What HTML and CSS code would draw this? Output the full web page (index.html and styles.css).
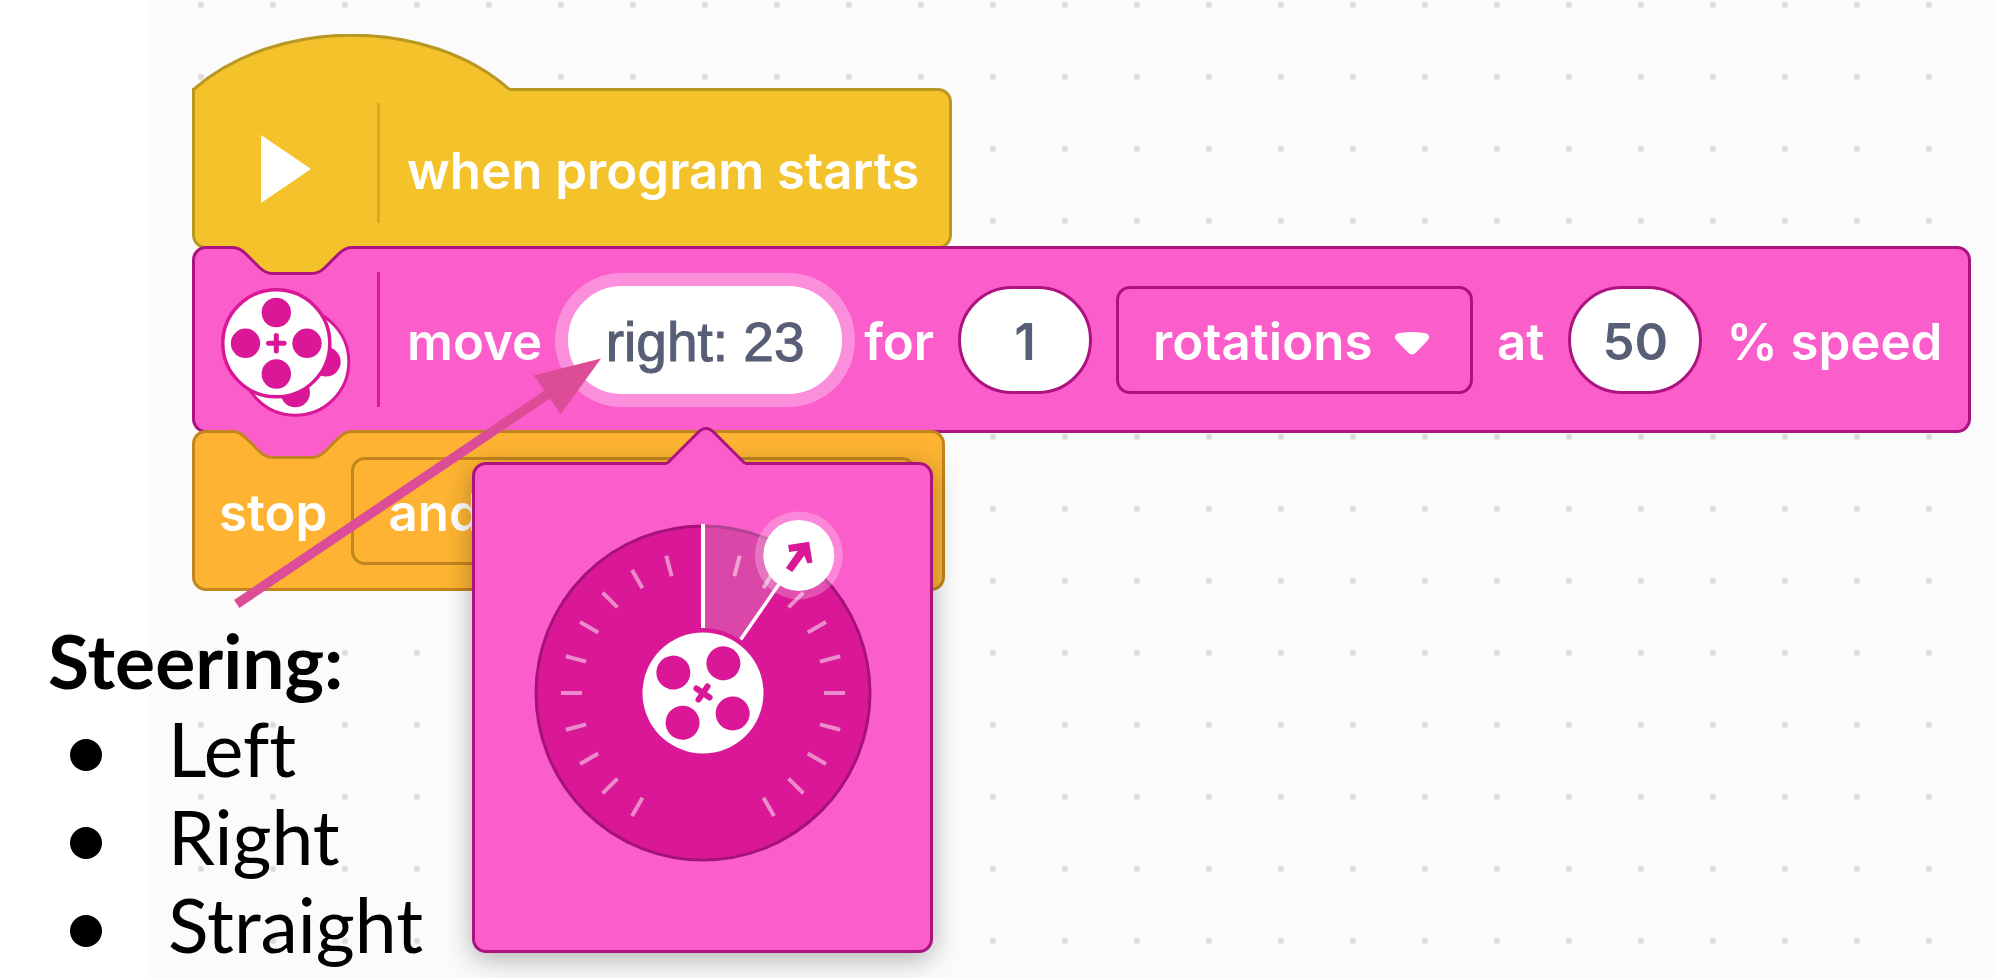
FILE: index.html
```html
<!DOCTYPE html>
<html lang="en">
<head>
  <meta charset="UTF-8" />
  <title>Steering</title>
  <link rel="stylesheet" href="styles.css">
</head>
<body>
  <main class="slide">
    <div class="workspace">
      <div class="block hat-block">
        <svg class="hat" width="322" height="60" viewBox="0 0 322 60">
          <path class="hat-fill" d="M3 59V55.5L1.5 55.5C84 -17 236 -17 317.5 55.5V59Z" />
          <path class="hat-line" d="M1.5 55.5C84 -17 236 -17 317.5 55.5" />
        </svg>
        <div class="icon-cell">
          <svg width="52" height="68" viewBox="0 0 52 68"><path fill="#fff" d="M1 0L51 34L1 68Z" /></svg>
        </div>
        <div class="divider"></div>
        <span class="label">when program starts</span>
      </div>

      <div class="block move-block">
        <svg class="notch" width="164" height="32" viewBox="0 0 164 32">
          <path class="notch-fill" d="M41 0V1.5C47.5 1.5 51 5 54 8L67.5 21.5C71 25 74 27.5 80.5 27.5H120C126.5 27.5 129.5 25 133 21.5L146.5 8C150 5 153 1.5 159.5 1.5V0Z" />
          <path class="notch-line" d="M39 1.5H41C47.5 1.5 51 5 54 8L67.5 21.5C71 25 74 27.5 80.5 27.5H120C126.5 27.5 129.5 25 133 21.5L146.5 8C150 5 153 1.5 159.5 1.5H162" />
        </svg>
        <div class="icon-cell">
          <svg class="wheels" width="130" height="130" viewBox="0 0 130 130">
            <g fill="#d91797">
              <circle cx="74.3" cy="73.8" r="53.5" fill="#fff" stroke="#d91797" stroke-width="3" />
              <circle cx="105" cy="73.8" r="14.7" />
              <circle cx="74.3" cy="104.5" r="14.7" />
              <circle cx="55.3" cy="55.3" r="53.5" fill="#fff" stroke="#d91797" stroke-width="3.5" />
              <circle cx="55.3" cy="24.5" r="14.7" />
              <circle cx="86" cy="55.3" r="14.7" />
              <circle cx="55.3" cy="86" r="14.7" />
              <circle cx="24.5" cy="55.3" r="14.7" />
            </g>
            <path d="M47.5 55.3H63.1M55.3 47.5V63.1" stroke="#d91797" stroke-width="5" stroke-linecap="round" />
          </svg>
        </div>
        <div class="divider"></div>
        <label class="label" for="steer">move</label>
        <div class="steer">
          <input class="field steer-field" id="steer" type="text" value="right: 23">
          <div class="popup">
            <svg class="pointer" width="84" height="42" viewBox="0 0 84 42">
              <path fill="#fb5ecb" d="M3 40V36.5L33.5 6Q42 -3 50.5 6L81 36.5V40Z" />
              <path fill="none" stroke="#ab147f" stroke-width="3" d="M3 36.5L33.5 6Q42 -3 50.5 6L81 36.5" />
            </svg>
            <svg class="dial" width="338" height="338" viewBox="-169 -169 338 338">
              <circle r="167" fill="#d91797" stroke="#a5127a" stroke-width="3" />
              <path fill="#e2e2e2" fill-opacity=".24" d="M0 -168.5V-65A65 65 0 0 1 37.3 -53.2L96.6 -138A168.5 168.5 0 0 0 0 -168.5Z" />
              <circle cx="95.8" cy="-137.6" r="44" fill="#fff" fill-opacity=".25" />
              <g id="ticks"></g>
              <path stroke="#fff" stroke-width="4" d="M0 -169V-65" />
              <path stroke="#fff" stroke-width="3.5" d="M37.7 -53.5L90 -129" />
              <circle cx="95.8" cy="-137.6" r="35.5" fill="#fff" />
              <path fill="#d91797" transform="translate(95.8 -137.6)" d="M-10.7 -10.3L10.3 -13.7L13.7 7L8.7 8L5.5 0L-6.5 16.7L-13 12.7L-1 -4.7L-9.7 -3.3Z" />
              <g transform="rotate(34.5)">
                <circle r="60.5" fill="#fff" />
                <g fill="#d91797">
                  <circle cx="0" cy="-36" r="17" />
                  <circle cx="36" cy="0" r="17" />
                  <circle cx="0" cy="36" r="17" />
                  <circle cx="-36" cy="0" r="17" />
                </g>
                <path d="M-8 0H8M0 -8V8" stroke="#d91797" stroke-width="6" stroke-linecap="round" />
              </g>
            </svg>
          </div>
        </div>
        <label class="label" for="amount">for</label>
        <input class="field" id="amount" type="text" value="1">
        <div class="dropdown">
          <select aria-label="unit">
            <option>rotations</option>
            <option>degrees</option>
            <option>seconds</option>
          </select>
          <svg class="caret" width="36" height="24" viewBox="0 0 36 24"><path fill="#fff" d="M6 1Q18 -1 30 1C35 1.5 36.5 5 33.5 8.5L22 20.5Q18 24.5 14 20.5L2.5 8.5C-.5 5 1 1.5 6 1Z" /></svg>
        </div>
        <label class="label" for="speed">at</label>
        <input class="field" id="speed" type="text" value="50">
        <span class="label">% speed</span>
      </div>

      <div class="block stop-block">
        <svg class="notch" width="164" height="32" viewBox="0 0 164 32">
          <path class="notch-fill" d="M41 0V1.5C47.5 1.5 51 5 54 8L67.5 21.5C71 25 74 27.5 80.5 27.5H120C126.5 27.5 129.5 25 133 21.5L146.5 8C150 5 153 1.5 159.5 1.5V0Z" />
          <path class="notch-line" d="M39 1.5H41C47.5 1.5 51 5 54 8L67.5 21.5C71 25 74 27.5 80.5 27.5H120C126.5 27.5 129.5 25 133 21.5L146.5 8C150 5 153 1.5 159.5 1.5H162" />
        </svg>
        <label class="label" for="then">stop</label>
        <div class="dropdown wide">
          <select id="then">
            <option>and hold position</option>
            <option>and brake</option>
            <option>and coast</option>
          </select>
        </div>
      </div>
    </div>

    <section class="notes">
      <h1>Steering:</h1>
      <ul>
        <li>Left</li>
        <li>Right</li>
        <li>Straight</li>
      </ul>
    </section>

    <svg class="callout" width="370" height="254" viewBox="0 0 370 254">
      <path stroke="#dd4c97" stroke-width="9.6" d="M4.7 248L316 38" />
      <path fill="#dd4c97" d="M369 2.5L302 19.3L328.7 58.3Z" />
    </svg>
  </main>

  <script>
    // tick every 15 degrees, none at the top or across the bottom
    const ticks = document.getElementById('ticks');
    for (let a = -150; a <= 150; a += 15) {
      if (a === 0) continue;
      const line = document.createElementNS('http://www.w3.org/2000/svg', 'line');
      line.setAttribute('y1', -121);
      line.setAttribute('y2', -142);
      line.setAttribute('transform', `rotate(${a})`);
      ticks.appendChild(line);
    }
  </script>
</body>
</html>
```
FILE: styles.css
```css
* {
  box-sizing: border-box;
}
body {
  margin: 0;
  background-color: #fff;
}
.slide {
  position: relative;
  min-height: 100vh;
  overflow: hidden;
}
.workspace {
  min-height: 100vh;
  margin-left: 149px;
  padding: 88px 24px 0 43px;
  background-color: #fbfbfb;
  background-image: radial-gradient(circle, #dadada 2px, transparent 4px);
  background-size: 72px 72px;
  background-position: 16px -31px;
  display: flex;
  flex-direction: column;
  align-items: flex-start;
}

/* blocks */
.block {
  position: relative;
  display: flex;
  align-items: center;
  min-height: 161px;
  padding-right: 26px;
  border: 3px solid;
  border-radius: 14px;
  font-family: Inter, "Liberation Sans", sans-serif;
  font-size: 51px;
  font-weight: 600;
  color: #fff;
  white-space: nowrap;
}
.block + .block {
  margin-top: -3px;
}
.hat-block {
  padding-right: 30px;
  background-color: #f4c32c;
  border-color: #b89822;
  border-top-left-radius: 0;
}
.move-block {
  min-height: 187px;
  background-color: #fb5ecb;
  border-color: #ab147f;
}
.stop-block {
  padding-left: 24px;
  background-color: #feb432;
  border-color: #c1861f;
}
.hat {
  position: absolute;
  top: -57px;
  left: -3px;
}
.hat-fill {
  fill: #f4c32c;
}
.hat-line {
  fill: none;
  stroke: #b89822;
  stroke-width: 3;
}
.notch {
  position: absolute;
  top: -3px;
  left: -3px;
}
.notch-line {
  fill: none;
  stroke-width: 3;
}
.move-block .notch-fill {
  fill: #f4c32c;
}
.move-block .notch-line {
  stroke: #ab147f;
}
.stop-block .notch-fill {
  fill: #fb5ecb;
}
.stop-block .notch-line {
  stroke: #c1861f;
}
.icon-cell {
  width: 182px;
  display: flex;
  justify-content: center;
}
.wheels {
  margin-top: 27px;
}
.divider {
  width: 3px;
  height: 135px;
  margin-right: 27px;
  background-color: #d91797;
}
.hat-block .divider {
  height: 120px;
  margin-bottom: 12px;
  background-color: #d3a928;
}
.label {
  padding-top: 4px;
}

/* fields */
.field {
  width: 134px;
  height: 108px;
  margin: 0 24px;
  padding: 4px 0 0;
  border: 3px solid #ab147f;
  border-radius: 54px;
  background-color: #fff;
  font: inherit;
  color: #575e75;
  text-align: center;
  outline: none;
}
.steer {
  position: relative;
  z-index: 2;
  margin: 0 22px 0 26px;
}
.steer-field {
  display: block;
  width: 274px;
  margin: 0;
  border-color: #fff;
  box-shadow: 0 0 0 13px #fc8fdc;
  font-family: "Liberation Sans", Arial, sans-serif;
  font-size: 55px;
  font-weight: normal;
  -webkit-text-stroke: 1px #575e75;
}
.dropdown {
  position: relative;
  margin-right: 24px;
}
.dropdown select {
  appearance: none;
  display: block;
  width: 357px;
  height: 108px;
  padding: 4px 34px 0;
  border: 3px solid #ab147f;
  border-radius: 14px;
  background-color: transparent;
  font: inherit;
  color: #fff;
}
.dropdown.wide {
  margin: 0 0 0 24px;
}
.dropdown.wide select {
  width: 565px;
  border-color: #c1861f;
}
.caret {
  position: absolute;
  top: 46px;
  right: 43px;
}

/* steering popup */
.popup {
  position: absolute;
  top: 176px;
  left: -96px;
  width: 461px;
  padding: 59px 0 88px;
  display: flex;
  justify-content: center;
  background-color: #fb5ecb;
  border: 3px solid #ab147f;
  border-radius: 14px;
  box-shadow: 0 6px 28px rgba(0, 0, 0, .3);
}
.pointer {
  position: absolute;
  top: -38px;
  left: 189px;
}
.dial {
  overflow: visible;
}
#ticks line {
  stroke: rgba(255, 255, 255, .5);
  stroke-width: 4;
}

/* slide text */
.notes {
  position: absolute;
  top: 616px;
  left: 48px;
  font-family: Lato, sans-serif;
  font-size: 75px;
  line-height: 88px;
  font-variant-ligatures: none;
  color: #000;
}
.notes h1 {
  margin: 0;
  font-size: inherit;
  font-weight: bold;
}
.notes ul {
  margin: 0;
  padding: 0 0 0 22px;
  list-style: none;
}
.notes li {
  display: flex;
  align-items: center;
  gap: 66px;
}
.notes li::before {
  content: "";
  width: 32px;
  height: 32px;
  margin-top: 14px;
  border-radius: 50%;
  background-color: #000;
}
.callout {
  position: absolute;
  top: 356px;
  left: 232px;
  z-index: 3;
  pointer-events: none;
}
```
